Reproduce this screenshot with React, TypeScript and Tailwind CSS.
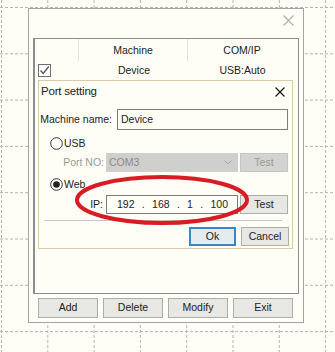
import React from "react"

const FONT = { fontFamily: "'Liberation Sans', Arial, sans-serif" }

const GRID_X = Array.from({ length: 8 }, (_, i) => 1.5 + i * 46.3)
const GRID_Y = Array.from({ length: 8 }, (_, i) => 7.5 + i * 46.3)

function Grid() {
  return (
    <svg className="absolute inset-0" width="335" height="352">
      {GRID_X.map(x => (
        <line key={"x" + x} x1={x} y1={0} x2={x} y2={352} stroke="#b4b4b0" strokeWidth="1" strokeDasharray="3 2" />
      ))}
      {GRID_Y.map(y => (
        <line key={"y" + y} x1={0} y1={y} x2={335} y2={y} stroke="#b4b4b0" strokeWidth="1" strokeDasharray="3 2" />
      ))}
    </svg>
  )
}

function Cross({ color, size = 10 }: { color: string; size?: number }) {
  return (
    <svg width={size} height={size} viewBox="0 0 10 10">
      <path d="M0.5 0.5 L9.5 9.5 M9.5 0.5 L0.5 9.5" stroke={color} strokeWidth="1.1" />
    </svg>
  )
}

function Radio({ checked }: { checked?: boolean }) {
  return (
    <svg width="13" height="13" viewBox="0 0 13 13">
      <circle cx="6.5" cy="6.5" r="5.8" fill="#fff" stroke="#333" strokeWidth="1" />
      {checked && <circle cx="6.5" cy="6.5" r="3.3" fill="#222" />}
    </svg>
  )
}

function Btn({ label, w, disabled, primary }: { label: string; w: string; disabled?: boolean; primary?: boolean }) {
  const base = "flex items-center justify-center text-[10.5px] whitespace-nowrap "
  if (disabled) return <div className={base + w + " bg-[#d3d3d1] border border-[#c6c6c4] text-[#9a9a98]"}>{label}</div>
  if (primary) return <div className={base + w + " bg-[#e4ecf0] border-2 border-[#3c86c4] text-[#222]"}>{label}</div>
  return <div className={base + w + " bg-[#e7e7e3] border border-[#adadab] text-[#222]"}>{label}</div>
}

export default function App() {
  return (
    <div className="relative w-[335px] h-[352px] bg-[#fefef6] overflow-hidden pt-[8px] pl-[28px] text-[#222]" style={FONT}>
      <Grid />

      <div className="relative w-[276px] h-[315px] border border-[#a4a4a2] bg-[#fefef6]">
        <div className="h-[29px] flex justify-end items-start pt-[6px] pr-[9px]">
          <Cross color="#b2b2b2" size={11} />
        </div>

        <div className="mx-[4px] h-[256px] border border-[#8e8e8e] border-l-2">
          <div className="h-[22px] flex text-[10.5px]">
            <div className="w-[44px] border-r border-[#e2e2de]" />
            <div className="w-[109px] border-r border-[#e2e2de] flex items-center justify-center pt-[1px]">Machine</div>
            <div className="flex-1 flex items-center justify-center pt-[1px] pr-[2px]">COM/IP</div>
          </div>
          <div className="h-[19px] flex items-center text-[10.5px]">
            <div className="w-[44px] pl-[3px] flex items-center">
              <div className="w-[13px] h-[13px] border border-[#6e6e6e] bg-[#fff] flex items-center justify-center">
                <svg width="11" height="11" viewBox="0 0 11 11">
                  <path d="M1.5 5.5 L4.2 8.5 L9.8 1.5" fill="none" stroke="#555" strokeWidth="1.3" />
                </svg>
              </div>
            </div>
            <div className="w-[110px] text-center">Device</div>
            <div className="flex-1 text-center pr-[2px]">USB:Auto</div>
          </div>

          <div className="relative ml-[3px] w-[255px] h-[169px] border border-[#d8cba6] bg-[#fefef6]">
            <div className="h-[22px] flex items-center justify-between pl-[2px] pr-[7px]">
              <span className="text-[11.5px] tracking-[-0.2px]">Port setting</span>
              <Cross color="#111" size={10} />
            </div>

            <div className="mt-[6px] h-[21px] flex items-center text-[10.5px] whitespace-nowrap">
              <div className="w-[73px] text-right">Machine name:</div>
              <div className="ml-[5px] w-[171px] h-[21px] border border-[#7e7e7e] bg-[#fefef6] flex items-center pl-[3px]">Device</div>
            </div>

            <div className="mt-[7px] pl-[11px] flex items-center gap-[1px] text-[10.5px] h-[13px]">
              <Radio />
              <span>USB</span>
            </div>

            <div className="mt-[3px] h-[19px] flex items-center text-[10.5px] whitespace-nowrap">
              <div className="w-[67px] pr-[2px] text-right text-[#9a9a98]">Port NO:</div>
              <div className="w-[132px] h-[19px] bg-[#cfcfcd] flex items-center justify-between pl-[3px] pr-[6px] text-[#8c8c8a]">
                <span>COM3</span>
                <svg width="8" height="5" viewBox="0 0 8 5">
                  <path d="M0.5 0.5 L4 4 L7.5 0.5" fill="none" stroke="#a8a8a6" strokeWidth="1" />
                </svg>
              </div>
              <div className="ml-[2px]">
                <Btn label="Test" w="w-[48px] h-[19px]" disabled />
              </div>
            </div>

            <div className="mt-[6px] pl-[11px] flex items-center gap-[1px] text-[10.5px] h-[13px]">
              <Radio checked />
              <span>Web</span>
            </div>

            <div className="mt-[4px] h-[19px] flex items-center text-[10.5px] whitespace-nowrap">
              <div className="w-[67px] pr-[3px] text-right">IP:</div>
              <div className="w-[132px] h-[19px] border border-[#7e7e7e] bg-[#fefef6] flex items-center pl-[10px] pr-[9px] justify-between">
                <span>192</span><span>.</span><span>168</span><span>.</span><span>1</span><span>.</span><span>100</span>
              </div>
              <div className="ml-[2px]">
                <Btn label="Test" w="w-[48px] h-[19px]" />
              </div>
            </div>

            <div className="mt-[6px] ml-[5px] w-[238px] h-px bg-[#c8c8c4]" />

            <div className="mt-[6px] flex justify-end gap-[5px] pr-[3px]">
              <Btn label="Ok" w="w-[47px] h-[19px]" primary />
              <Btn label="Cancel" w="w-[48px] h-[19px]" />
            </div>

            <svg className="absolute left-0 top-0 overflow-visible" width="255" height="169">
              <ellipse cx="123" cy="119" rx="85" ry="23" fill="none" stroke="#d71c24" strokeWidth="4" />
            </svg>
          </div>
        </div>

        <div className="mt-[4px] pl-[9px] flex gap-[5px]">
          <Btn label="Add" w="w-[60px] h-[20px]" />
          <Btn label="Delete" w="w-[60px] h-[20px]" />
          <Btn label="Modify" w="w-[60px] h-[20px]" />
          <Btn label="Exit" w="w-[60px] h-[20px]" />
        </div>
      </div>
    </div>
  )
}
